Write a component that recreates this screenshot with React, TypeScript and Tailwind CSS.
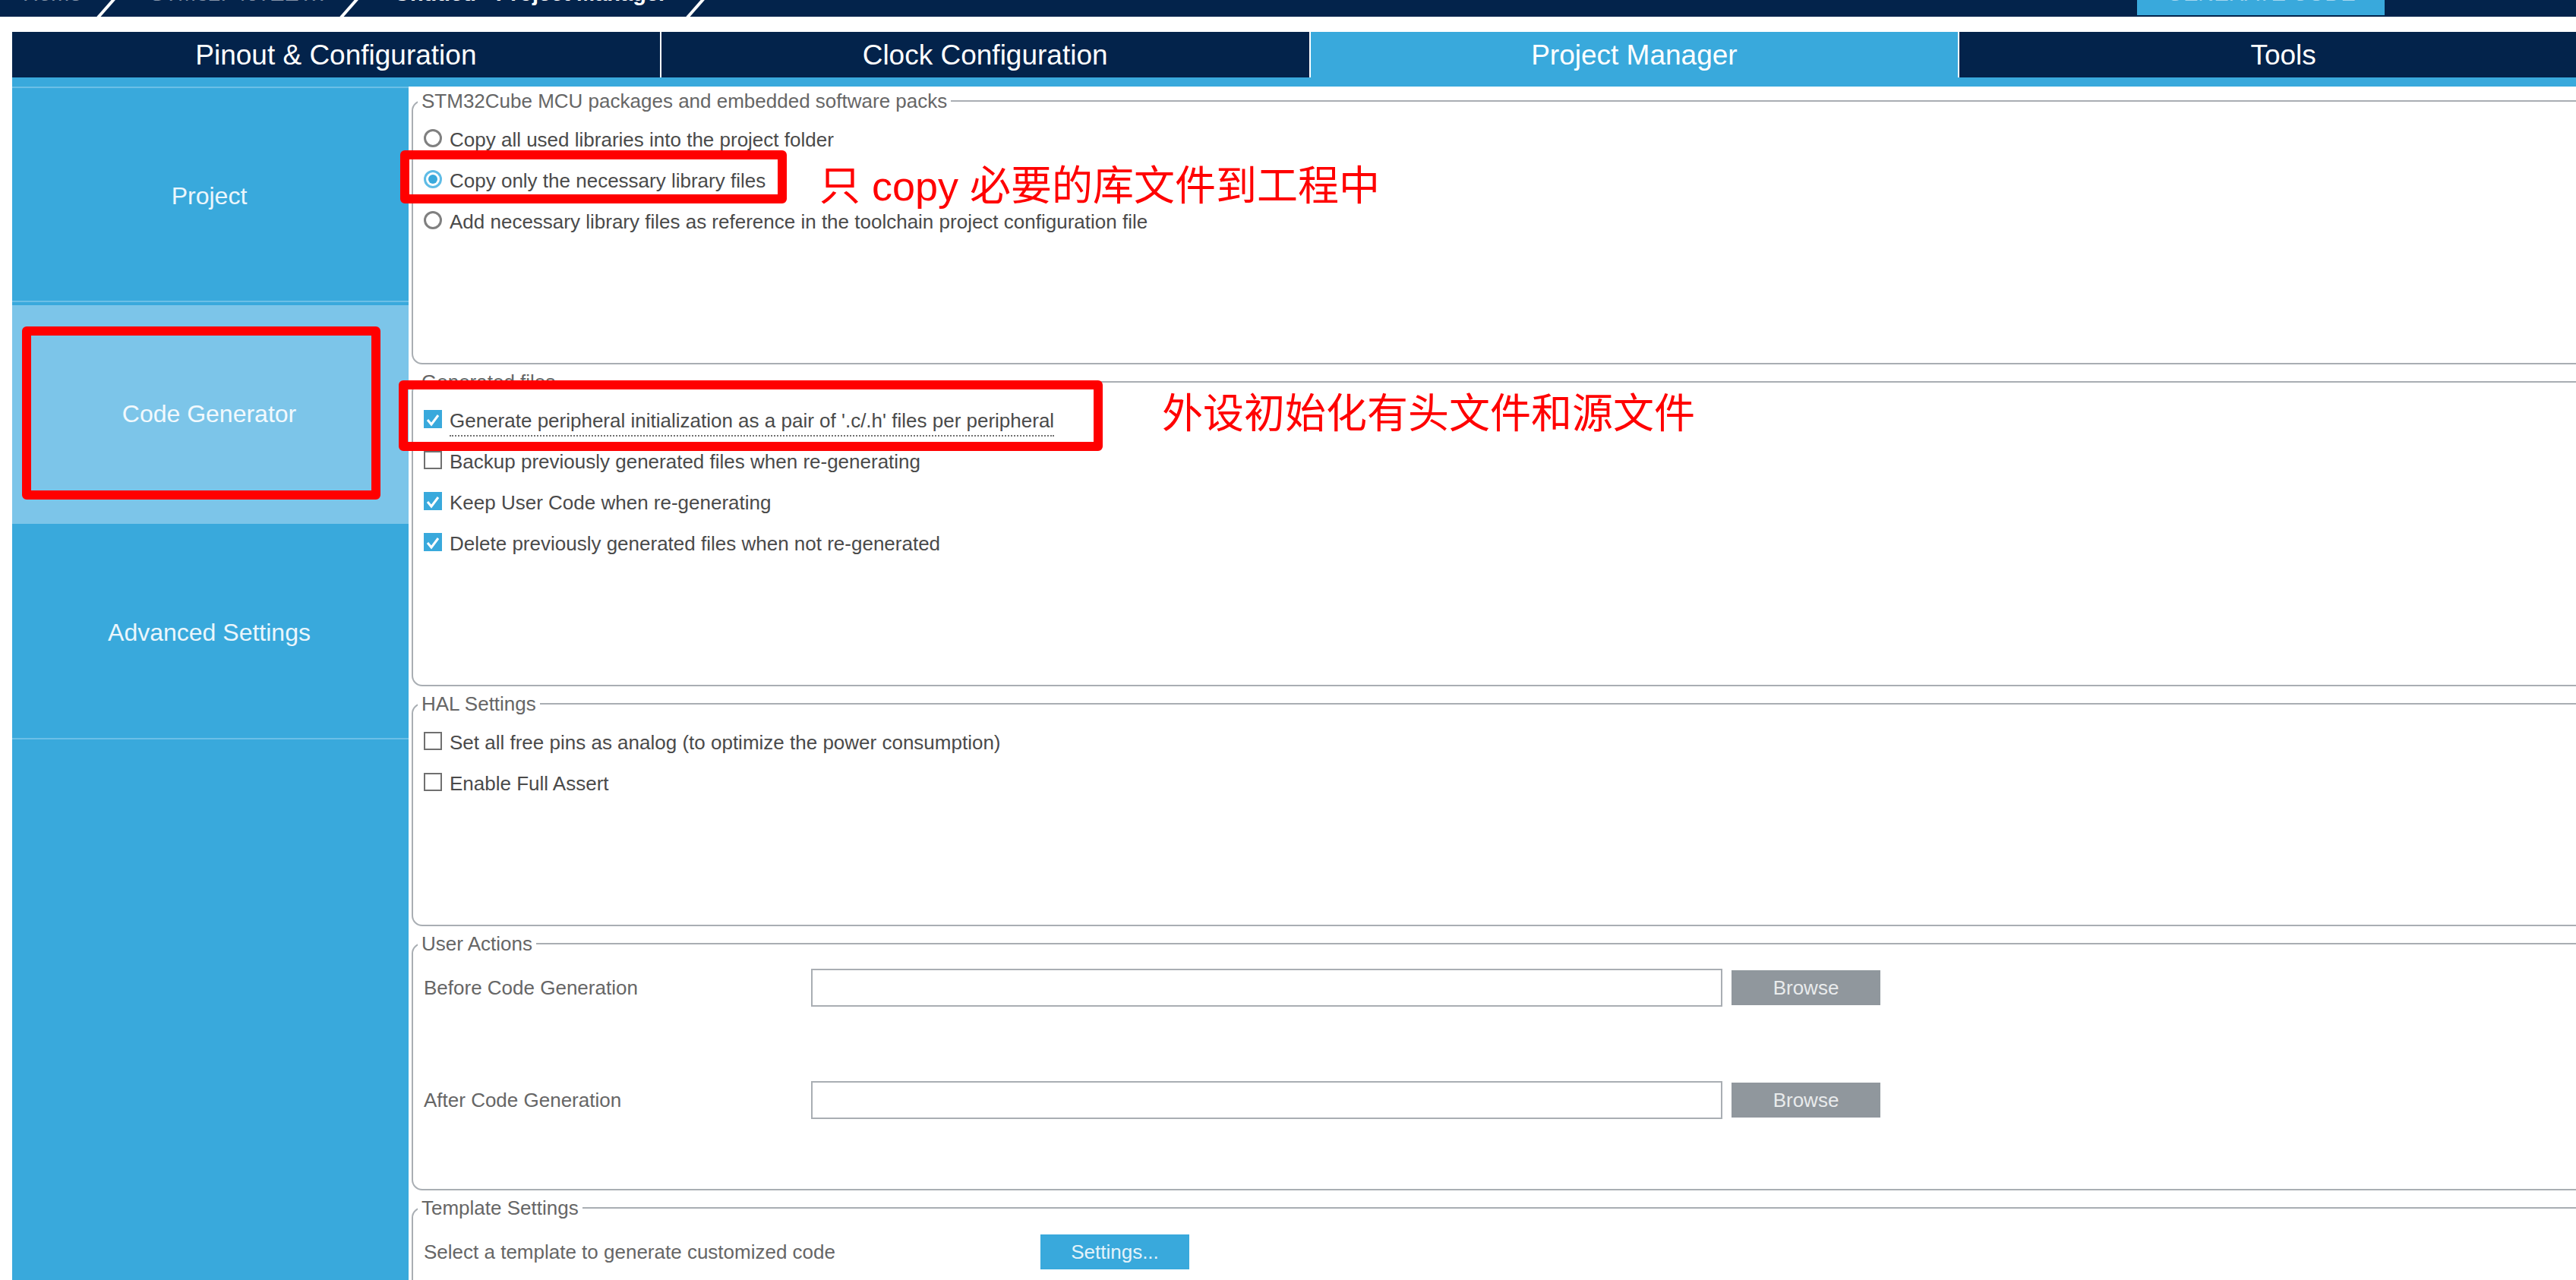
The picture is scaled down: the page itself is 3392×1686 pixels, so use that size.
import React, { useState } from "react";

const TABS = ["Pinout & Configuration", "Clock Configuration", "Project Manager", "Tools"];

function Slash() {
  return (
    <svg width="26" height="22" viewBox="0 0 26 22" className="shrink-0" aria-hidden="true">
      <path d="M24 -2 L2 23" stroke="#ffffff" strokeWidth="4" fill="none" />
    </svg>
  );
}

function Breadcrumbs() {
  return (
    <header className="flex h-[22px] shrink-0 items-end overflow-hidden bg-[#03234b] text-[29px] leading-[34px] text-[#8494a9]">
      <nav className="flex items-end" aria-label="Breadcrumb">
        <a href="#home" className="w-[127px] pb-[14px] pl-[30px]">Home</a>
        <Slash />
        <a href="#device" className="w-[294px] pb-[14px] pl-[44px]">STM32F407ZETx</a>
        <Slash />
        <a href="#project" className="w-[430px] whitespace-nowrap pb-[14px] pl-[46px] font-bold text-white">
          Untitled - Project Manager
        </a>
        <Slash />
      </nav>
      <button type="button" className="mb-[2px] ml-auto mr-[252px] w-[326px] bg-[#39a9dc] pb-[12px] leading-[34px] text-[#a4d7ef]">
        GENERATE CODE
      </button>
    </header>
  );
}

function TopTabs() {
  const [active, setActive] = useState(2);
  return (
    <nav className="mt-[20px] grid h-[60px] shrink-0 grid-cols-4 bg-[#03234b]" aria-label="Views">
      {TABS.map((t, i) => (
        <button
          key={t}
          type="button"
          onClick={() => setActive(i)}
          className={
            "border-r-2 border-white pt-[2px] text-[37px] leading-[42px] text-white " +
            (i === active ? "bg-[#39a9dc]" : "bg-[#03234b]")
          }
        >
          {t}
        </button>
      ))}
    </nav>
  );
}

function SideItem({ label, className, active, line, marked }: { label: string; className: string; active?: boolean; line?: boolean; marked?: boolean }) {
  return (
    <button
      type="button"
      className={
        "relative flex w-full shrink-0 flex-col text-[32px] text-white/90 " + (active ? "bg-[#7cc5e9] " : "bg-[#39a9dc] ") + className
      }
    >
      <span className="flex w-full flex-1 items-center justify-center pr-[3px] pt-[4px]">{label}</span>
      <span className={"mb-[4px] h-[2px] w-full " + (line ? "bg-[#6bbfe6]" : "")} />
      {marked && (
        <span className="pointer-events-none absolute bottom-[32px] left-[13px] right-[37px] top-[28px] rounded-[6px] border-[12px] border-[#ff0000]" />
      )}
    </button>
  );
}

function Sidebar() {
  return (
    <aside className="flex w-[522px] shrink-0 flex-col border-t-2 border-[#6bbfe6] bg-[#39a9dc]">
      <SideItem label="Project" className="h-[286px]" line />
      <SideItem label="Code Generator" className="h-[288px]" active marked />
      <SideItem label="Advanced Settings" className="h-[288px]" line />
    </aside>
  );
}

function Group({ title, className, children }: { title: string; className: string; children: React.ReactNode }) {
  return (
    <fieldset className={"min-w-0 rounded-[14px] border-2 border-[#a9aeb3] px-[14px] " + className}>
      <legend className="-ml-[8px] px-[5px] text-[26px] leading-[30px] text-[#666666]">{title}</legend>
      {children}
    </fieldset>
  );
}

function Marker({ className }: { className: string }) {
  return <span className={"pointer-events-none absolute z-10 rounded-[6px] border-[12px] border-[#ff0000] " + className} />;
}

function Note({ className, children }: { className: string; children: React.ReactNode }) {
  return (
    <p lang="zh-CN" className={"absolute whitespace-nowrap text-[54px] leading-[60px] text-[#ff0000] " + className}>
      {children}
    </p>
  );
}

function RadioRow({ label, checked, onSelect }: { label: string; checked: boolean; onSelect: () => void }) {
  return (
    <label className="flex h-[54px] items-center gap-[10px] text-[26px] leading-[30px] text-[#4a4a4a]">
      <span className="grid size-[24px] shrink-0">
        <input
          type="radio"
          name="packages"
          checked={checked}
          onChange={onSelect}
          className="col-start-1 row-start-1 size-[24px] appearance-none rounded-full border-[3px] border-[#808080] bg-white checked:border-[#5fbce6]"
        />
        {checked && <span className="pointer-events-none col-start-1 row-start-1 size-[12px] place-self-center rounded-full bg-[#39a9dc]" />}
      </span>
      <span className="pt-[3px]">{label}</span>
    </label>
  );
}

function CheckRow({ label, initial, focused }: { label: string; initial?: boolean; focused?: boolean }) {
  const [on, setOn] = useState(!!initial);
  return (
    <label className="flex h-[54px] items-center gap-[10px] text-[26px] leading-[30px] text-[#4a4a4a]">
      <span className="grid size-[24px] shrink-0">
        <input
          type="checkbox"
          checked={on}
          onChange={() => setOn(!on)}
          className="col-start-1 row-start-1 size-[24px] appearance-none border-2 border-[#707070] bg-white checked:border-[#39a9dc] checked:bg-[#39a9dc]"
        />
        {on && (
          <svg viewBox="0 0 24 24" className="pointer-events-none col-start-1 row-start-1 size-[24px]" aria-hidden="true">
            <path d="M5 13 L10 19 L19 7" fill="none" stroke="#ffffff" strokeWidth="3" />
          </svg>
        )}
      </span>
      <span className={"pt-[3px] " + (focused ? "-mb-[6px] border-b-2 border-dotted border-[#707070] pb-[4px]" : "")}>{label}</span>
    </label>
  );
}

function CommandRow({ id, label }: { id: string; label: string }) {
  return (
    <div className="flex items-center text-[26px] leading-[30px]">
      <label htmlFor={id} className="w-[510px] text-[#666666]">{label}</label>
      <input id={id} type="text" className="h-[50px] w-[1200px] border-2 border-[#a9aeb3] bg-white px-2 outline-none" />
      <button type="button" className="ml-[12px] h-[46px] w-[196px] bg-[#90979d] text-[#e9ebec]">Browse</button>
    </div>
  );
}

export default function App() {
  const [pkg, setPkg] = useState(1);
  return (
    <div className="flex h-screen flex-col overflow-hidden bg-white font-['Liberation_Sans','Noto_Sans_CJK_SC',sans-serif]">
      <Breadcrumbs />
      <div className="-mr-[43px] ml-[16px] flex min-h-0 flex-1 flex-col">
        <TopTabs />
        <div className="h-[12px] shrink-0 bg-[#39a9dc]" />
        <div className="flex min-h-0 flex-1">
          <Sidebar />
          <main className="flex min-w-0 flex-1 flex-col gap-[8px] pl-[4px] pt-[4px]">
            <Group title="STM32Cube MCU packages and embedded software packs" className="min-h-[362px]">
              <div className="pt-[7px]">
                <RadioRow label="Copy all used libraries into the project folder" checked={pkg === 0} onSelect={() => setPkg(0)} />
                <div className="relative">
                  <RadioRow label="Copy only the necessary library files" checked={pkg === 1} onSelect={() => setPkg(1)} />
                  <Marker className="-left-[31px] -top-[11px] h-[70px] w-[509px]" />
                  <Note className="left-[521px] top-[6px]">只 copy 必要的库文件到工程中</Note>
                </div>
                <RadioRow
                  label="Add necessary library files as reference in the toolchain project configuration file"
                  checked={pkg === 2}
                  onSelect={() => setPkg(2)}
                />
              </div>
            </Group>
            <Group title="Generated files" className="min-h-[416px]">
              <div className="pt-[7px]">
                <div className="relative">
                  <CheckRow label="Generate peripheral initialization as a pair of '.c/.h' files per peripheral" initial focused />
                  <Marker className="-left-[33px] -top-[24px] h-[93px] w-[927px]" />
                  <Note className="-top-[10px] left-[972px]">外设初始化有头文件和源文件</Note>
                </div>
                <CheckRow label="Backup previously generated files when re-generating" />
                <CheckRow label="Keep User Code when re-generating" initial />
                <CheckRow label="Delete previously generated files when not re-generated" initial />
              </div>
            </Group>
            <Group title="HAL Settings" className="min-h-[308px]">
              <div className="pt-[7px]">
                <CheckRow label="Set all free pins as analog (to optimize the power consumption)" />
                <CheckRow label="Enable Full Assert" />
              </div>
            </Group>
            <Group title="User Actions" className="min-h-[340px]">
              <div className="flex flex-col gap-[98px] pt-[18px]">
                <CommandRow id="before" label="Before Code Generation" />
                <CommandRow id="after" label="After Code Generation" />
              </div>
            </Group>
            <Group title="Template Settings" className="min-h-[340px]">
              <div className="flex items-center pt-[20px] text-[26px] leading-[30px]">
                <span className="w-[812px] text-[#666666]">Select a template to generate customized code</span>
                <button type="button" className="h-[46px] w-[196px] bg-[#39a9dc] text-[#e4f3fa]">Settings...</button>
              </div>
            </Group>
          </main>
        </div>
      </div>
    </div>
  );
}
